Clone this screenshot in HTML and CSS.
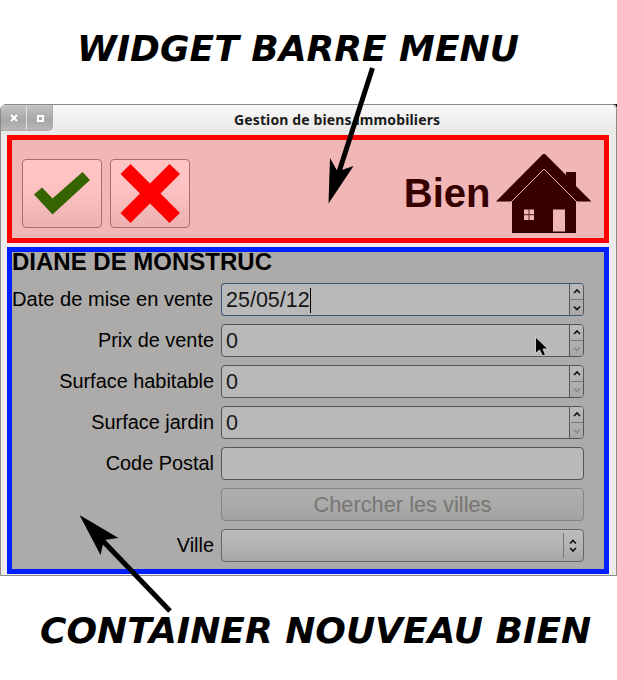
FILE: index.html
```
<!DOCTYPE html>
<html lang="fr">
<head>
<meta charset="utf-8">
<title>Gestion de biens immobiliers</title>
<link rel="stylesheet" href="styles.css">
</head>
<body>
<main class="page">
  <h1 class="caption"><span class="cap-top">WIDGET BARRE MENU</span></h1>
  <section class="window">
    <header class="titlebar">
      <div class="controls">
        <span class="control"><svg width="8" height="8" viewBox="0 0 8 8"><path d="M1 1 7 7M7 1 1 7" stroke="#fff" stroke-width="2.200"/></svg></span>
        <span class="control"><svg width="8" height="8" viewBox="0 0 8 8"><path d="M2 2H7V7H2Z" fill="none" stroke="#fff" stroke-width="2"/></svg></span>
      </div>
      <div class="title"><span class="title-text">Gestion de biens immobiliers</span></div>
    </header>
    <div class="toolbar">
      <button class="tool" aria-label="Valider"><svg width="78" height="67" viewBox="0 0 78 67"><path d="M11 34.500 19 27.500 29.500 38.500 59.500 12 67 20 29.500 54.500Z" fill="#366400"/></svg></button>
      <button class="tool" aria-label="Annuler"><svg width="78" height="67" viewBox="0 0 78 67"><path d="M19.500 4 39 23.500 58.500 4 69 14 49.500 33.500 69 53 58.500 63 39 43.500 19.500 63 9.500 53 29 33.500 9.500 14Z" fill="#f00"/></svg></button>
      <span class="brand">Bien</span>
      <svg class="house" width="96" height="80" viewBox="0 0 96 80">
        <path d="M47 0h2L70 21V18H80V32L95.500 47.500H80V79H16V47.500H0Z" fill="#360000"/>
        <path d="M14.500 48.500 48 15 81.500 48.500" fill="none" stroke="#f1b6b6" stroke-width="1"/>
        <path d="M28 55.500H38V66H28ZM57 55.500H69V77.500H57Z" fill="#f1b6b6"/>
        <path d="M33 55V66M28 60.700H38" stroke="#5c2020" stroke-width="1"/>
      </svg>
    </div>
    <div class="container">
      <h2 class="owner">DIANE DE MONSTRUC</h2>
      <div class="form">
        <label class="label wide">Date de mise en vente</label>
        <div class="field spin focus"><span class="value">25/05/12<i class="caret"></i></span><span class="steps"><svg width="14" height="31" viewBox="0 0 14 31"><path d="M4 9 7 6 10 9M4 22.500 7 25.500 10 22.500" class="glyph"/><path d="M1 15.500H13" class="rule"/></svg></span></div>
        <label class="label">Prix de vente</label>
        <div class="field spin"><span class="value">0</span><span class="steps"><svg width="14" height="31" viewBox="0 0 14 31"><path d="M4 9 7 6 10 9" class="glyph"/><path d="M4 22.500 7 25.500 10 22.500" class="glyph off"/><path d="M1 15.500H13" class="rule"/></svg></span></div>
        <label class="label">Surface habitable</label>
        <div class="field spin"><span class="value">0</span><span class="steps"><svg width="14" height="31" viewBox="0 0 14 31"><path d="M4 9 7 6 10 9" class="glyph"/><path d="M4 22.500 7 25.500 10 22.500" class="glyph off"/><path d="M1 15.500H13" class="rule"/></svg></span></div>
        <label class="label">Surface jardin</label>
        <div class="field spin"><span class="value">0</span><span class="steps"><svg width="14" height="31" viewBox="0 0 14 31"><path d="M4 9 7 6 10 9" class="glyph"/><path d="M4 22.500 7 25.500 10 22.500" class="glyph off"/><path d="M1 15.500H13" class="rule"/></svg></span></div>
        <label class="label">Code Postal</label>
        <div class="field"></div>
        <span></span>
        <button class="field search" disabled>Chercher les villes</button>
        <label class="label">Ville</label>
        <div class="field combo"><svg width="20" height="31" viewBox="0 0 20 31"><path d="M.5 3V28" class="rule"/><path d="M7 13.500 10 10.500 13 13.500M7 18 10 21 13 18" class="glyph"/></svg></div>
      </div>
    </div>
  </section>
  <h1 class="caption"><span class="cap-bottom">CONTAINER NOUVEAU BIEN</span></h1>
  <svg class="overlay" width="617" height="680" viewBox="0 0 617 680">
    <path d="M617 104V108L615.500 105 612 104Z"/>
    <path d="M372.500 68 338 175" stroke="#000" stroke-width="5"/>
    <path d="M328.500 203.500 330 158 337.500 171.500 353.500 166Z"/>
    <path d="M170 611 102 540" stroke="#000" stroke-width="5"/>
    <path d="M79.500 515 118.500 538 104 540 100.500 555Z"/>
    <path d="M535.500 337V353.500L539.500 350 542.500 356 545.500 354.500 543 349H548Z" stroke="#cfcfcf" stroke-width="1"/>
  </svg>
</main>
</body>
</html>
```
FILE: styles.css
```
* { box-sizing: border-box; }
body { margin: 0; background: #fff; font-family: "Liberation Sans", Arial, sans-serif; color: #000; }
.page { position: relative; width: 617px; height: 680px; overflow: hidden; }
.overlay { position: absolute; left: 0; top: 0; pointer-events: none; }
.caption { margin: 0; height: 104px; font: italic bold 36px/42px "DejaVu Sans", sans-serif; white-space: nowrap; }
.cap-top { display: block; padding: 28px 0 0 77px; }
.cap-bottom { display: block; padding: 34px 0 0 40px; }
.window { height: 472px; border: 1px solid #8b8b8b; border-radius: 6px 6px 0 0; background: #edecea; }
.titlebar { display: flex; height: 30px; border-radius: 5px 5px 0 0; background: linear-gradient(#f8f8f7, #e9e8e7); }
.controls { display: flex; width: 52px; height: 26px; overflow: hidden; border: solid #aaa; border-width: 0 1px 1px 0; border-radius: 5px 0 5px 0; background: linear-gradient(#c4c4c3, #a6a6a5 60%, #b9b9b8); }
.control { display: flex; flex: 1; align-items: center; justify-content: center; padding-top: 1px; }
.control + .control { border-left: 1px solid #dedede; }
.title { flex: 1; padding-left: 181px; font: bold 14px/29px "Noto Sans", sans-serif; letter-spacing: .13px; color: #1c1c1c; white-space: nowrap; }
.toolbar { display: flex; width: 602px; height: 108px; margin: 0 6px; padding: 19px 12px 0 10px; border: 5px solid #f00; background: #f1b6b6; }
.tool { width: 80px; height: 69px; margin-right: 8px; padding: 0; border: 1px solid #b06c6c; border-radius: 4px; background: linear-gradient(#ffc5c5, #fdc1c1 45%, #ebb2b2); }
.tool svg { display: block; }
.brand { margin: 11px 5.500px 0 auto; font-size: 40px; line-height: 46px; font-weight: bold; color: #360000; }
.house { margin-top: -5px; }
.container { width: 602px; height: 327px; margin: 4px 6px 0; border: 5px solid #0020ff; background: #acaba9; }
.owner { height: 31px; margin: 0; font-size: 24px; line-height: 20px; white-space: nowrap; }
.form { display: grid; grid-template-columns: 202px 363px; grid-auto-rows: 33px; gap: 8px 7px; }
.label { font-size: 19.9px; line-height: 33px; text-align: right; white-space: nowrap; }
.wide { padding-right: 1px; font-size: 20.1px; }
.field { display: flex; height: 33px; overflow: hidden; border: 1px solid #555; border-radius: 4px; background: #b9b9b9; }
.value { display: flex; align-items: center; flex: 1; padding: 1px 0 0 4px; font-size: 21.5px; color: #171717; }
.focus { border-color: #3d5779 #555 #3d5779 #3d5779; }
.caret { width: 1px; height: 25px; background: #000; }
.steps { width: 14px; border-left: 1px solid #555; background: linear-gradient(#bababa, #a8a8a6); }
.steps svg { display: block; margin-left: -.5px; }
.glyph { fill: none; stroke: #111; stroke-width: 1.6; }
.off { stroke: #858584; stroke-width: 1.3; }
.rule { stroke: #777; stroke-width: 1; }
.search { align-items: center; justify-content: center; padding: 0; border-color: #858584; background: linear-gradient(#b0b0af, #a3a3a1); font: 21.8px "Liberation Sans", Arial, sans-serif; color: #777675; }
.combo { justify-content: flex-end; border-color: #666; background: linear-gradient(#bbb, #b4b4b3 55%, #a5a5a3); }
```
